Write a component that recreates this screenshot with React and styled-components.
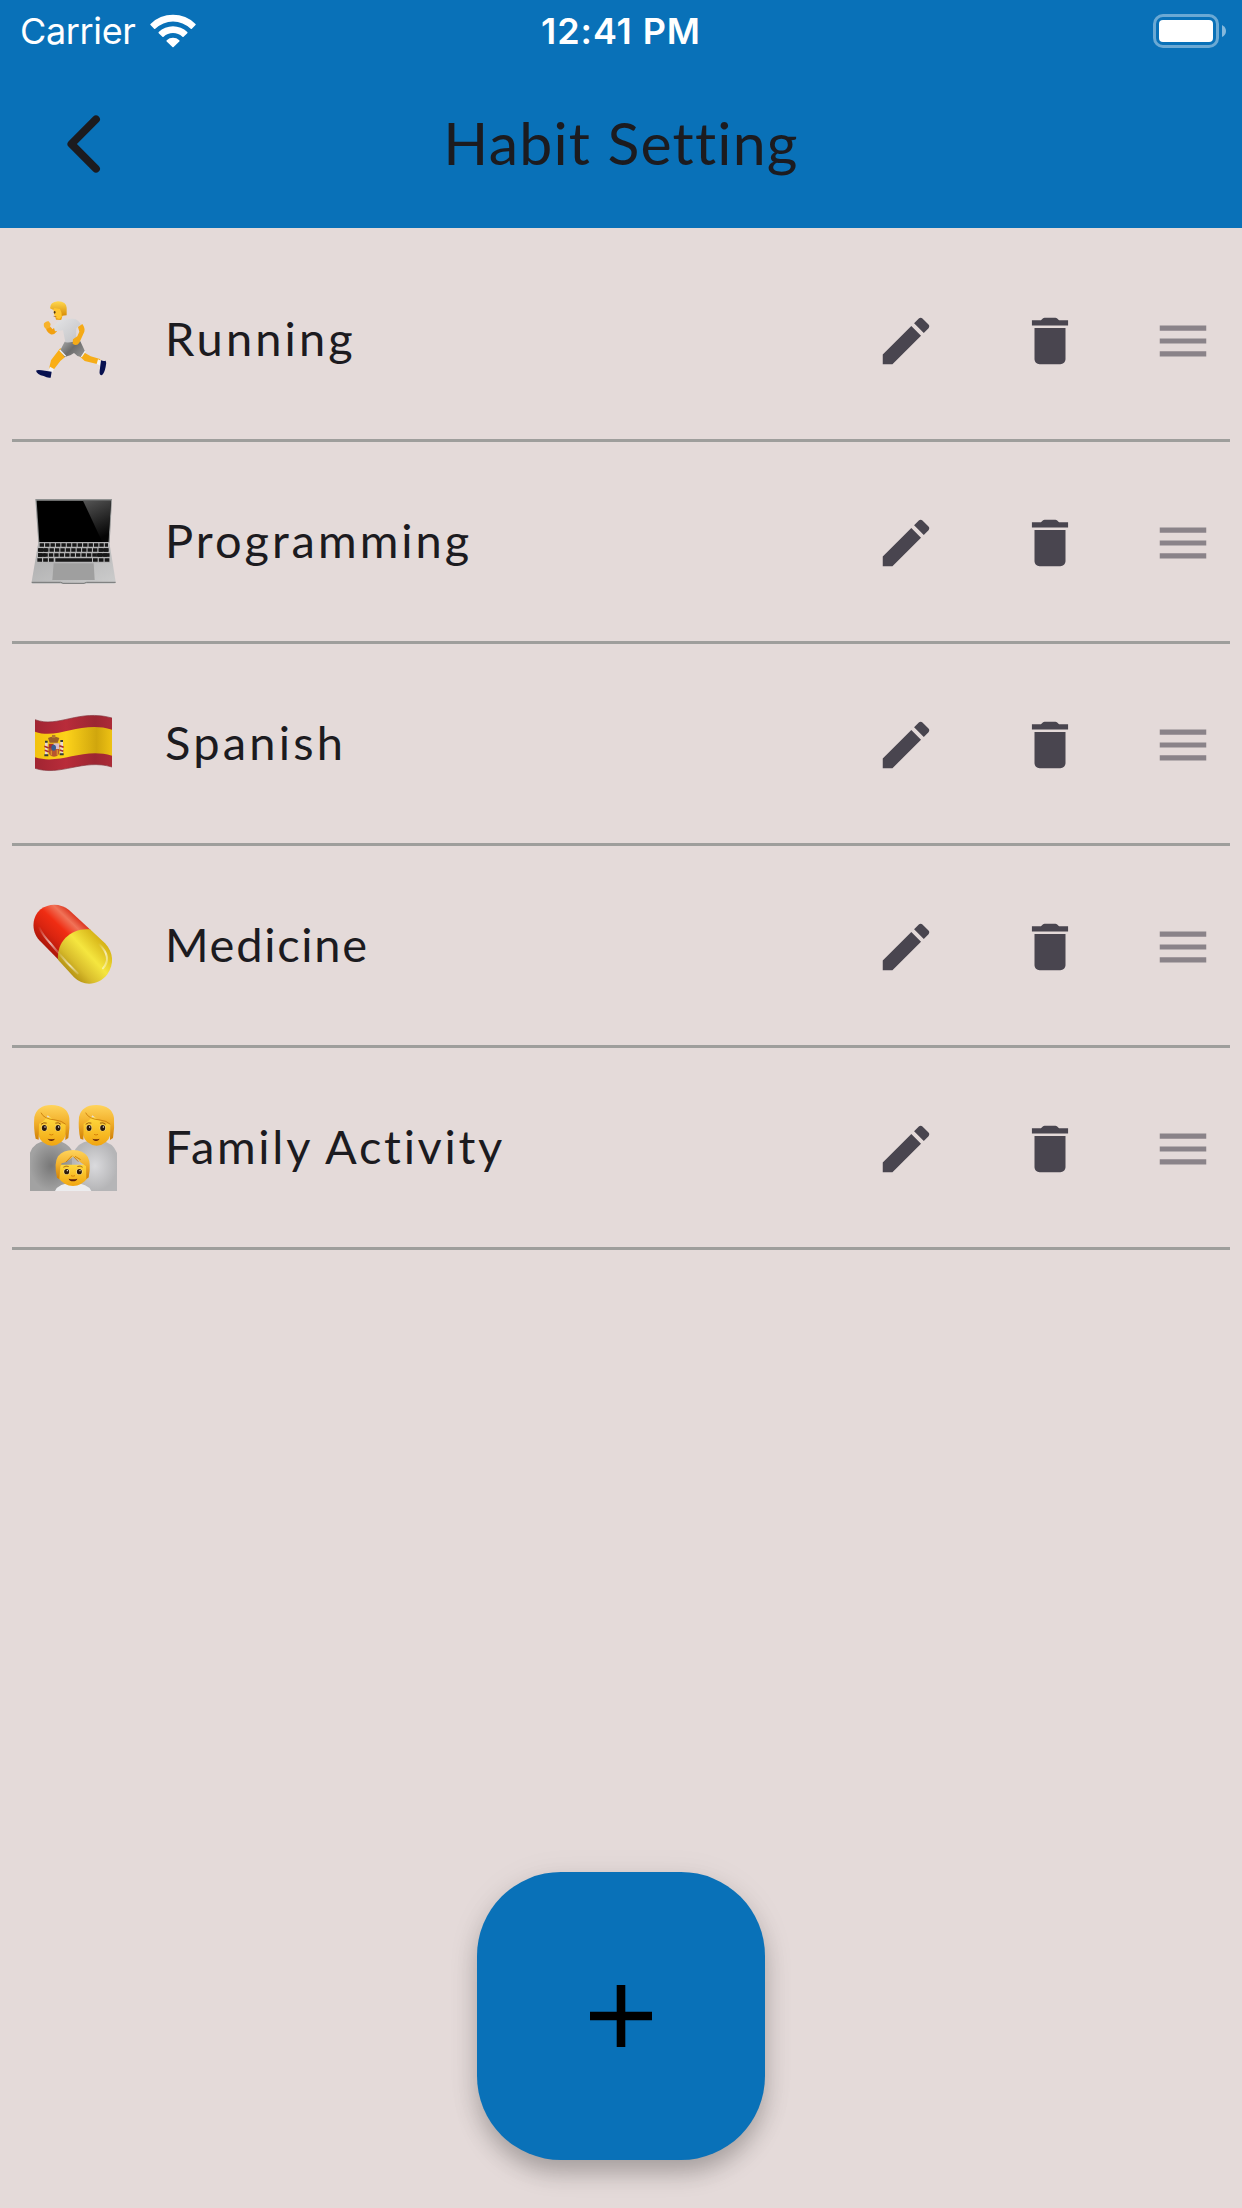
import styled, { createGlobalStyle } from 'styled-components'

const habits = [
    { id: 1, name: 'Running', Icon: RunnerIcon, spacing: '3.1px' },
    { id: 2, name: 'Programming', Icon: LaptopIcon, spacing: '3px' },
    { id: 3, name: 'Spanish', Icon: SpainIcon, spacing: '3.2px' },
    { id: 4, name: 'Medicine', Icon: PillIcon, spacing: '1.7px' },
    { id: 5, name: 'Family Activity', Icon: FamilyIcon, spacing: '2.7px' },
]

export default function App() {
    return (
        <Screen>
            <GlobalStyle />
            <TopBar>
                <StatusBar>
                    <Carrier>
                        Carrier
                        <WifiIcon />
                    </Carrier>
                    <Clock>12:41 PM</Clock>
                    <Battery />
                </StatusBar>
                <NavBar>
                    <BackButton aria-label="Back">
                        <svg width="36" height="60" viewBox="0 0 36 60">
                            <path d="M31 5.3 6.4 30 31 54.7" fill="none" stroke="#1c1b1f" strokeWidth="7.8" strokeLinecap="round" strokeLinejoin="round" />
                        </svg>
                    </BackButton>
                    <Title>Habit Setting</Title>
                </NavBar>
            </TopBar>
            <HabitList>
                {habits.map(habit => <HabitRow key={habit.id} habit={habit} />)}
            </HabitList>
            <Footer>
                <AddButton aria-label="Add habit">
                    <svg width="62" height="62" viewBox="0 0 62 62">
                        <path d="M26.7 0h8.6v26.7H62v8.6H35.3V62h-8.6V35.3H0v-8.6h26.7z" fill="#000" />
                    </svg>
                </AddButton>
            </Footer>
        </Screen>
    )
}

function HabitRow({ habit }) {
    const { name, Icon, spacing } = habit
    return (
        <Row>
            <Icon />
            <HabitName $spacing={spacing}>{name}</HabitName>
            <IconButton aria-label="Edit">
                <MaterialIcon viewBox="0 0 24 24">
                    <path d="M3 17.25V21h3.75L17.81 9.94l-3.75-3.75L3 17.25zM20.71 7.04c.39-.39.39-1.02 0-1.41l-2.34-2.34c-.39-.39-1.02-.39-1.41 0l-1.83 1.83 3.75 3.75 1.83-1.83z" />
                </MaterialIcon>
            </IconButton>
            <IconButton aria-label="Delete">
                <MaterialIcon viewBox="0 0 24 24">
                    <path d="M6 19c0 1.1.9 2 2 2h8c1.1 0 2-.9 2-2V7H6v12zM19 4h-3.5l-.71-.71c-.18-.18-.44-.29-.7-.29H9.91c-.26 0-.52.11-.7.29L8.5 4H5v2h14V4z" />
                </MaterialIcon>
            </IconButton>
            <DragHandle>
                <MaterialIcon viewBox="0 0 24 24" $color="#8a8389">
                    <path d="M3 18h18v-2H3v2zm0-5h18v-2H3v2zm0-7v2h18V6H3z" />
                </MaterialIcon>
            </DragHandle>
        </Row>
    )
}

function WifiIcon() {
    return (
        <svg width="46" height="34" viewBox="0 0 46 34" fill="#fff">
            <path d="M0.5 9.9a32 32 0 0 1 45 0q.5.6 0 1.200l-3.600 3.600q-.6.500-1.200 0a25.500 25.500 0 0 0-35.400 0q-.6.500-1.200 0L.5 11.100q-.5-.6 0-1.200z" />
            <path d="M8.700 18a20.500 20.500 0 0 1 28.600 0q.5.600 0 1.200l-3.700 3.600q-.6.500-1.200 0a13.800 13.800 0 0 0-18.800 0q-.6.500-1.200 0l-3.700-3.600q-.5-.6 0-1.200z" />
            <path d="M16.700 26.200a9.300 9.300 0 0 1 12.600 0q.5.600 0 1.200l-5.700 5.500q-.6.500-1.200 0l-5.700-5.500q-.5-.6 0-1.200z" />
        </svg>
    )
}

function Battery() {
    return (
        <svg width="74" height="34" viewBox="0 0 74 34">
            <rect x="1.500" y="1.500" width="63" height="31" rx="8.500" fill="none" stroke="#fff" strokeOpacity=".4" strokeWidth="3" />
            <rect x="6" y="6" width="54" height="22" rx="4" fill="#fff" />
            <path d="M69 11q4 2 4 6t-4 6z" fill="#fff" fillOpacity=".5" />
        </svg>
    )
}

function RunnerIcon() {
    return (
        <Emoji viewBox="0 27 312 312">
            <defs>
                <linearGradient id="shirt" x1="0" x2="1" y2="1">
                    <stop offset="0" stopColor="#e4e4e6" />
                    <stop offset="1" stopColor="#c2c2c5" />
                </linearGradient>
                <linearGradient id="shorts" x1="0" x2="1" y2=".6">
                    <stop offset="0" stopColor="#adadad" />
                    <stop offset=".55" stopColor="#6c6c6c" />
                    <stop offset="1" stopColor="#8a8a8a" />
                </linearGradient>
                <linearGradient id="hair" x2="0" y2="1">
                    <stop offset="0" stopColor="#ffd84e" />
                    <stop offset="1" stopColor="#d88d08" />
                </linearGradient>
            </defs>
            <path d="M178 228 190 216 212 229 240 237 247 254 231 252 194 243z" fill="#f6ad18" />
            <path d="m234 238 11 5-4 14-11-5z" fill="#f2f2f4" />
            <path d="M243 241q8 4 14 1 4 7 0 18-4 21-12 26-8-1-6-14z" fill="#07104f" />
            <path d="M121 204 139 228 121 243 102 268 87 266 93 241z" fill="#f9ae16" />
            <path d="m90 260 12 7-6 12-11-6z" fill="#f2f2f4" />
            <path d="M48 272q5-4 17-1l30 4-3 18q-9 2-21-5-20-4-23-16z" fill="#07104f" />
            <path d="m134 185 47-1 14 30-12 17q-14-3-21-12-8 7-28 12l-14-19z" fill="url(#shorts)" />
            <path d="m119 210 18 19m47 2 12-18" stroke="#f1f1f2" strokeWidth="4" />
            <path d="M105 140 111 154Q102 166 92 163 79 156 78 145L88 137 98 148z" fill="#f2a010" />
            <path d="M72 130q8-8 14-6l6 8-3 11-11 4q-9-6-6-17z" fill="#f7b22b" />
            <path d="m104 102 24 2-4 16-16-1z" fill="#eda313" />
            <path d="M101 140q13-19 30-24h28q14 0 24 17l-14 12-1 35q-10 9-32 7l-7-36-24 3z" fill="url(#shirt)" />
            <path d="M174 141 187 132Q196 144 193 155L178 188Q170 200 158 191L159 178 172 169 178 155z" fill="#f5aa17" />
            <path d="M99 82 102 102Q107 116 118 117L130 105 127 84z" fill="#ffc62f" />
            <path d="M90 85q0-19 24-21 25 1 26 19v23l-15 1q1-8-5-20l-17-3-3 6z" fill="url(#hair)" />
            <ellipse cx="104" cy="97" rx="2.500" ry="4" fill="#4b3215" />
            <path d="m101 109 8 1" stroke="#a85b12" strokeWidth="2" />
        </Emoji>
    )
}

function LaptopIcon() {
    const keyRows = [
        { y: 195, x1: 59, x2: 264 },
        { y: 210, x1: 56, x2: 266 },
        { y: 225, x1: 54, x2: 268 },
    ]
    return (
        <Emoji viewBox="0 33 312 312">
            <defs>
                <linearGradient id="glare" x2=".3" y2="1">
                    <stop offset="0" stopColor="#555" />
                    <stop offset="1" stopColor="#050505" />
                </linearGradient>
                <linearGradient id="deck" x2="1" y2="1">
                    <stop offset="0" stopColor="#a9a9aa" />
                    <stop offset="1" stopColor="#ccc" />
                </linearGradient>
            </defs>
            <path d="M46 57h230l-7 131H55z" fill="#8f9191" />
            <path d="M50 62h223l-8 124H58z" fill="#000" />
            <path d="M189 62h84l-8 124h-18z" fill="url(#glare)" />
            <path d="M55 187h213l19 118q0 6-5 6H38q-4 0-3-6z" fill="url(#deck)" />
            <path d="M57 188h210l4 60H50z" fill="#b5b5b6" />
            {keyRows.map(row => (
                <path key={row.y} d={`M${row.x1} ${row.y}H${row.x2}`} stroke="#171717" strokeWidth="10" strokeDasharray="13 3.300" />
            ))}
            <path d="M54 210h28m155 0h29M54 225h23m152 0h39" stroke="#171717" strokeWidth="10" />
            <path d="M52 240h50m117 0h51" stroke="#171717" strokeWidth="11" strokeDasharray="14 3.500" />
            <path d="M106 240h110" stroke="#171717" strokeWidth="11" />
            <path d="M101 250h120l3 50H97z" fill="#9f9f9f" />
            <path d="M35 307h87l7 3h63l8-3h87" stroke="#737474" strokeWidth="3" fill="none" />
        </Emoji>
    )
}

function SpainIcon() {
    return (
        <Emoji viewBox="0 9 312 312">
            <defs>
                <linearGradient id="flagRed">
                    <stop offset="0" stopColor="#a12532" />
                    <stop offset=".4" stopColor="#b92c3a" />
                    <stop offset=".78" stopColor="#9c2632" />
                    <stop offset="1" stopColor="#ac2b37" />
                </linearGradient>
                <linearGradient id="flagYellow">
                    <stop offset="0" stopColor="#f2c20e" />
                    <stop offset=".4" stopColor="#fdd31a" />
                    <stop offset=".8" stopColor="#d0a60d" />
                    <stop offset="1" stopColor="#eec213" />
                </linearGradient>
            </defs>
            <path d="M45 89C115 115 176 56 276 84V231C188 205 122 260 45 235z" fill="url(#flagRed)" />
            <path d="M45 125C115 150 184 91 276 119V197C188 171 122 226 45 202z" fill="url(#flagYellow)" />
            <path d="M45 89C115 115 176 56 276 84M45 235c77 25 143-30 231-4" fill="none" stroke="#84313a" strokeWidth="2" />
            <path d="M84 144q16-9 34 0l-5 14H89z" fill="#9b5f2a" />
            <path d="M96 144v-9h10v9z" fill="#b5782f" />
            <path d="M86 161h32v24q-1 14-16 15-15-1-16-15z" fill="#b8552f" />
            <path d="M101 160h17v17h-17z" fill="#d6bccb" />
            <path d="M87 162h12v13H87z" fill="#a8312b" />
            <ellipse cx="101" cy="173" rx="7" ry="9" fill="#385d91" />
            <path d="M94 182v14m18-17v16" stroke="#d8922a" strokeWidth="4" />
            <path d="M79 157v38m46-41v38" stroke="#e9d8d3" strokeWidth="8" />
            <path d="m73 169 13 5m-12 7 12 4m32-18 13 5m-12 8 11 4" stroke="#a52c33" strokeWidth="5" />
            <path d="M73 196h12m34-3h12M75 155h8m38-2h8" stroke="#353a36" strokeWidth="6" />
        </Emoji>
    )
}

function PillIcon() {
    return (
        <Emoji viewBox="0 15 312 312">
            <defs>
                <linearGradient id="pillRed" x1=".2" y1=".8" x2=".8" y2=".2">
                    <stop offset="0" stopColor="#a81408" />
                    <stop offset=".3" stopColor="#d92410" />
                    <stop offset=".55" stopColor="#f02d13" />
                    <stop offset=".78" stopColor="#f07358" />
                    <stop offset="1" stopColor="#d6210d" />
                </linearGradient>
                <linearGradient id="pillYellow" x1=".15" y1=".85" x2=".85" y2=".2">
                    <stop offset="0" stopColor="#a8830b" />
                    <stop offset=".3" stopColor="#d9bd2c" />
                    <stop offset=".6" stopColor="#f5e63f" />
                    <stop offset="1" stopColor="#d3ae12" />
                </linearGradient>
                <linearGradient id="pillShine" x2="1" y2="1">
                    <stop offset="0" stopColor="#fff" stopOpacity=".05" />
                    <stop offset=".6" stopColor="#fff" stopOpacity=".65" />
                    <stop offset="1" stopColor="#fff" stopOpacity=".2" />
                </linearGradient>
            </defs>
            <path d="M114 208 58 151C32 123 36 79 62 58 88 37 125 41 147 60L212 120z" fill="url(#pillRed)" />
            <path d="M114 209C109 152 157 112 210 118L255 160C281 188 283 222 262 253 237 287 190 291 162 262z" fill="url(#pillYellow)" />
            <path d="M58 113q10 23 35 49l21 25" fill="none" stroke="url(#pillShine)" strokeWidth="6" strokeLinecap="round" />
            <path d="M115 188q24 30 58 62" fill="none" stroke="url(#pillShine)" strokeWidth="6" strokeLinecap="round" />
            <path d="M238 163q40 40 11 72" fill="none" stroke="url(#pillShine)" strokeWidth="6" strokeLinecap="round" />
        </Emoji>
    )
}

function Face() {
    return (
        <>
            <path d="M51 82h88l-1 50q-9 33-42 35-34-3-42-35z" fill="url(#skin)" />
            <path d="M47 146q-7-30-4-65Q51 46 94 45q49 1 54 39 2 30-3 60l-9 6 1-47q-25-1-54-27-7 18-26 25l-1 48z" fill="url(#blond)" />
            <path d="M63 68q8 19 43 22 20 2 31 13" fill="none" stroke="#c77a0a" strokeWidth="2.500" />
            <path d="M64 102q7-6 15-3m28 0q8-3 15 3" fill="none" stroke="#9b5b0b" strokeWidth="3" strokeLinecap="round" />
            <ellipse cx="73" cy="114" rx="9" ry="10" fill="#ffe9a0" />
            <ellipse cx="114" cy="114" rx="9" ry="10" fill="#ffe9a0" />
            <ellipse cx="73" cy="114" rx="7.500" ry="9" fill="#2c190a" />
            <ellipse cx="114" cy="114" rx="7.500" ry="9" fill="#2c190a" />
            <circle cx="75" cy="111" r="2" fill="#fff" />
            <circle cx="116" cy="111" r="2" fill="#fff" />
            <path d="M88 133q6 4 12 0" fill="none" stroke="#d78209" strokeWidth="3" />
            <path d="M83 146q11 3 22 0-4 7-11 7t-11-7z" fill="#5f200d" />
        </>
    )
}

function FamilyIcon() {
    return (
        <Emoji viewBox="0 21 312 312">
            <defs>
                <linearGradient id="skin" x2="0" y2="1">
                    <stop offset="0" stopColor="#ffd83d" />
                    <stop offset="1" stopColor="#f1a511" />
                </linearGradient>
                <linearGradient id="blond" x2="0" y2="1">
                    <stop offset="0" stopColor="#ffd45c" />
                    <stop offset=".5" stopColor="#f2b02b" />
                    <stop offset="1" stopColor="#cf7f06" />
                </linearGradient>
                <radialGradient id="coatDark">
                    <stop offset="0" stopColor="#777" />
                    <stop offset="1" stopColor="#a2a2a2" />
                </radialGradient>
                <radialGradient id="coatLight">
                    <stop offset="0" stopColor="#dadadd" />
                    <stop offset="1" stopColor="#b5b5b7" />
                </radialGradient>
            </defs>
            <path d="M30 303V188q12-34 52-36h28q34 5 48 32v119z" fill="url(#coatDark)" />
            <path d="M158 303V194q13-38 50-42h32q39 4 51 37v114z" fill="url(#coatLight)" />
            <Face />
            <g transform="translate(134)"><Face /></g>
            <path d="M105 303q11-24 54-24 45 1 55 24z" fill="#ececee" />
            <path d="M112 224h92l1 38q-20 26-46 26t-46-26z" fill="url(#skin)" />
            <path d="M111 263q-10-43 3-64 16-19 45-19 31 1 44 20 11 20 3 62l-7 5-1-38-17-12-6-8-16-9q-20 17-34 20l-4 10-3 38z" fill="url(#blond)" />
            <path d="m156 197-18 19m23-16 14 15m-10-16 17 10" fill="none" stroke="#c67908" strokeWidth="2.500" />
            <path d="M131 231q7-5 14-2m28 0q8-3 14 2" fill="none" stroke="#9b5b0b" strokeWidth="2.500" strokeLinecap="round" />
            <ellipse cx="140" cy="245" rx="9.500" ry="9" fill="#ffe9a0" />
            <ellipse cx="178" cy="245" rx="9.500" ry="9" fill="#ffe9a0" />
            <ellipse cx="140" cy="245" rx="7.500" ry="8" fill="#2c190a" />
            <ellipse cx="178" cy="245" rx="7.500" ry="8" fill="#2c190a" />
            <circle cx="142" cy="242" r="2" fill="#fff" />
            <circle cx="180" cy="242" r="2" fill="#fff" />
            <path d="M153 257q6 3 12 0" fill="none" stroke="#d78209" strokeWidth="3" />
            <path d="M146 266q13 3 26 0-3 8-13 8t-13-8z" fill="#5f200d" />
        </Emoji>
    )
}

const GlobalStyle = createGlobalStyle`
    * {
        box-sizing: border-box;
    }
    body {
        margin: 0;
        background: #e4dad9;
    }
    button {
        border: 0;
        padding: 0;
        background: none;
    }
    svg {
        display: block;
        flex-shrink: 0;
    }
`

const Screen = styled.div`
    width: 1242px;
    height: 2208px;
    display: flex;
    flex-direction: column;
    background: #e4dad9;
    color: #1c1b1f;
    font-family: Lato, "Open Sans", sans-serif;
`

const TopBar = styled.header`
    height: 228px;
    background: #0971b8;
`

const StatusBar = styled.div`
    height: 60px;
    padding: 0 15px 0 20px;
    display: grid;
    grid-template-columns: 1fr auto 1fr;
    align-items: center;
    color: #fff;
    font-family: Inter, sans-serif;
    font-size: 36px;
    line-height: 60px;
    > svg {
        justify-self: end;
    }
`

const Carrier = styled.div`
    display: flex;
    align-items: center;
    gap: 14px;
    letter-spacing: -.35px;
`

const Clock = styled.div`
    font-weight: 600;
    letter-spacing: .9px;
    margin-right: 5px;
    padding-top: 1px;
`

const NavBar = styled.div`
    height: 168px;
    padding: 0 65px;
    display: grid;
    grid-template-columns: 36px 1fr 36px;
    align-items: center;
`

const BackButton = styled.button`
    height: 60px;
`

const Title = styled.h1`
    margin: 0;
    padding-bottom: 3px;
    text-align: center;
    font-size: 59px;
    font-weight: 400;
    line-height: 72px;
    letter-spacing: 1.2px;
`

const HabitList = styled.ul`
    list-style: none;
    margin: 0;
    padding: 12px 12px 0;
    flex: 1;
`

const Row = styled.li`
    height: 202px;
    padding: 3px 16px 0 8px;
    border-bottom: 3px solid #9e9e9c;
    display: flex;
    align-items: center;
`

const Emoji = styled.svg`
    width: 104px;
    height: 104px;
`

const HabitName = styled.span`
    flex: 1;
    margin-left: 41px;
    padding-bottom: 6px;
    font-size: 47px;
    line-height: 60px;
    letter-spacing: ${props => props.$spacing};
`

const IconButton = styled.button`
    width: 144px;
    height: 144px;
    display: flex;
    justify-content: center;
    align-items: center;
`

const DragHandle = styled.div`
    margin-left: 30px;
`

const MaterialIcon = styled.svg`
    width: 62px;
    height: 62px;
    fill: ${props => props.$color || '#49454f'};
`

const Footer = styled.footer`
    padding-bottom: 48px;
    display: flex;
    justify-content: center;
`

const AddButton = styled.button`
    width: 288px;
    height: 288px;
    border-radius: 84px;
    display: flex;
    justify-content: center;
    align-items: center;
    && {
        background: #0971b8;
    }
    box-shadow:
        0 14px 24px -2px rgba(0, 0, 0, .25),
        0 4px 36px rgba(0, 0, 0, .06);
`
